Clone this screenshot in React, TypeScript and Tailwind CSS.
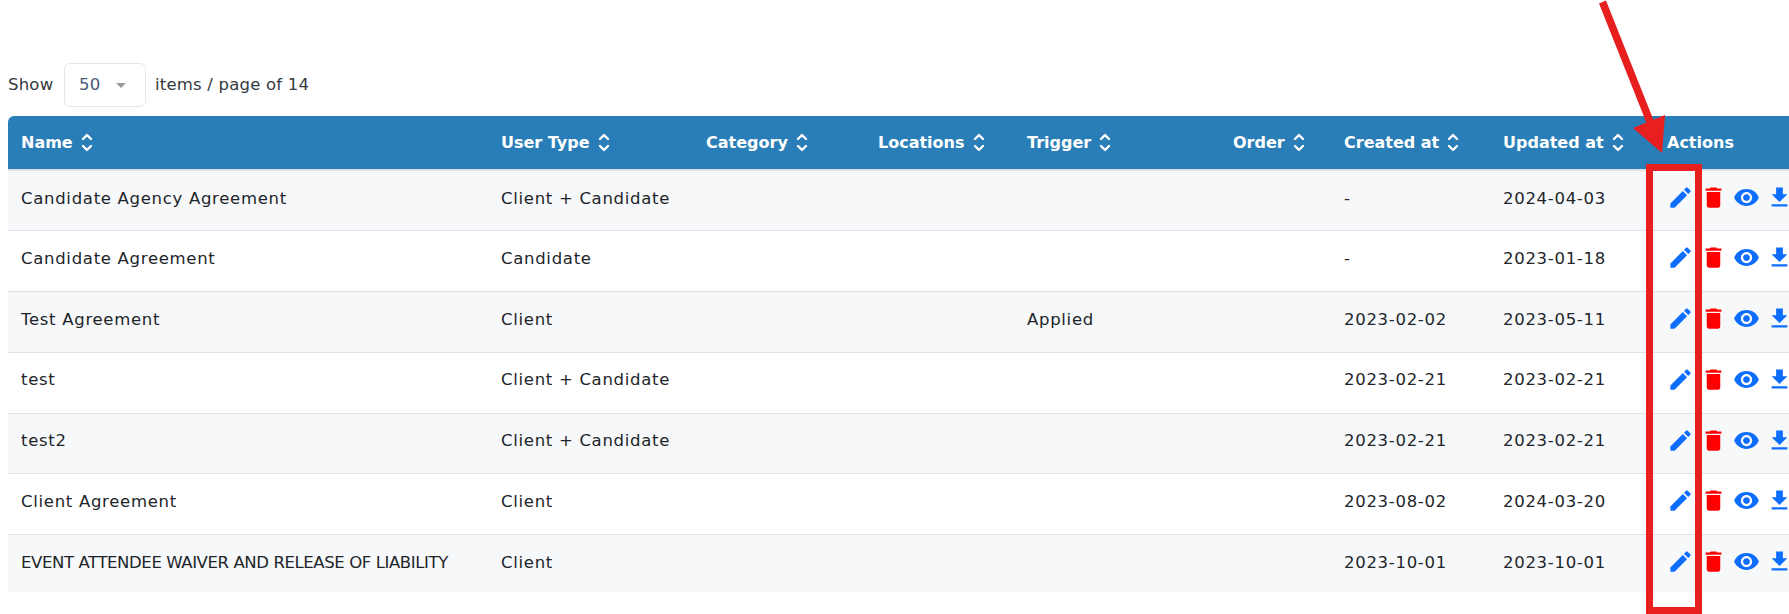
import { MdEdit, MdDelete, MdVisibility, MdFileDownload } from 'react-icons/md';

const COLUMNS = [
  { label: 'Name', width: 'w-[480px]', sortable: true },
  { label: 'User Type', width: 'w-[205px]', sortable: true },
  { label: 'Category', width: 'w-[172px]', sortable: true },
  { label: 'Locations', width: 'w-[149px]', sortable: true },
  { label: 'Trigger', width: 'w-[206px]', sortable: true },
  { label: 'Order', width: 'w-[111px]', sortable: true },
  { label: 'Created at', width: 'w-[159px]', sortable: true },
  { label: 'Updated at', width: 'w-[164px]', sortable: true },
  { label: 'Actions', width: 'w-[200px]', sortable: false },
];

const ROWS = [
  { name: 'Candidate Agency Agreement', userType: 'Client + Candidate', trigger: '', created: '-', updated: '2024-04-03' },
  { name: 'Candidate Agreement', userType: 'Candidate', trigger: '', created: '-', updated: '2023-01-18' },
  { name: 'Test Agreement', userType: 'Client', trigger: 'Applied', created: '2023-02-02', updated: '2023-05-11' },
  { name: 'test', userType: 'Client + Candidate', trigger: '', created: '2023-02-21', updated: '2023-02-21' },
  { name: 'test2', userType: 'Client + Candidate', trigger: '', created: '2023-02-21', updated: '2023-02-21' },
  { name: 'Client Agreement', userType: 'Client', trigger: '', created: '2023-08-02', updated: '2024-03-20' },
  { name: 'EVENT ATTENDEE WAIVER AND RELEASE OF LIABILITY', userType: 'Client', trigger: '', created: '2023-10-01', updated: '2023-10-01' },
];

function SortIcon() {
  return (
    <svg width="12" height="19" viewBox="0 0 12 19" fill="none" stroke="white" strokeWidth="2.4" strokeLinecap="round" strokeLinejoin="round">
      <path d="M2 6 L6 2 L10 6" />
      <path d="M2 13 L6 17 L10 13" />
    </svg>
  );
}

const cellClass = 'whitespace-nowrap px-[13px] pt-[15.5px] align-top text-left font-normal';

export default function App() {
  return (
    <div className="relative h-[614px] w-[1789px] overflow-hidden bg-white pl-2 pt-[63px] font-['DejaVu_Sans',sans-serif] text-[16.5px] text-[#212529]">
      <div className="mb-[9px] flex h-[44px] items-center tracking-[0.2px]">
        <span className="w-[47px] text-[#343a40]">Show</span>
        <div className="ml-[9px] flex h-[44px] w-[82px] items-center rounded-md border border-[#e5e7eb] pl-[14px]">
          <span className="text-[#4a5a78]">50</span>
          <span className="ml-[16px] h-0 w-0 border-x-[5px] border-t-[5px] border-x-transparent border-t-[#999999]" />
        </div>
        <span className="ml-[9px] text-[#343a40]">items / page of 14</span>
      </div>
      <table className="w-[1846px] table-fixed border-collapse">
        <thead>
          <tr className="h-[54px] bg-[#2a7eb8] text-[16px] text-white">
            {COLUMNS.map((col, i) => (
              <th key={col.label} className={`${col.width} px-[13px] text-left font-bold ${i === 0 ? 'rounded-tl-md' : ''}`}>
                <span className="inline-flex items-center gap-2 whitespace-nowrap">
                  {col.label}
                  {col.sortable ? <SortIcon /> : null}
                </span>
              </th>
            ))}
          </tr>
        </thead>
        <tbody className="border-t-2 border-[#dee2e6] tracking-[0.7px]">
          {ROWS.map((row, i) => {
            const isLast = i === ROWS.length - 1;
            return (
              <tr
                key={row.name}
                className={`${isLast ? 'h-[57px]' : 'h-[60.8px] border-b border-[#dee2e6]'} ${i % 2 === 0 ? 'bg-[#f7f8fa]' : 'bg-white'}`}
              >
                <td className={cellClass}>
                  <span className={isLast ? 'tracking-[-0.4px]' : ''}>{row.name}</span>
                </td>
                <td className={cellClass}>{row.userType}</td>
                <td className={cellClass} />
                <td className={cellClass} />
                <td className={cellClass}>{row.trigger}</td>
                <td className={cellClass} />
                <td className={cellClass}>{row.created}</td>
                <td className={cellClass}>{row.updated}</td>
                <td className="px-[13px] pt-[13px] align-top">
                  <div className="flex gap-[6px]">
                    <MdEdit size={27} color="#0d6efd" />
                    <MdDelete size={27} color="#ff0000" />
                    <MdVisibility size={27} color="#0d6efd" />
                    <MdFileDownload size={27} color="#0d6efd" />
                  </div>
                </td>
              </tr>
            );
          })}
        </tbody>
      </table>

      {/* red annotation over the actions column */}
      <div className="absolute left-[1646px] top-[164px] h-[450px] w-[56px] border-[7px] border-[#e71f1f]" />
      <svg className="absolute left-0 top-0" width="1789" height="614" fill="none">
        <path d="M1602.5 2 L1651 124" stroke="#e71f1f" strokeWidth="7.5" />
        <path d="M1633 128 L1665 115 L1662 153 Z" fill="#e71f1f" />
      </svg>
    </div>
  );
}
